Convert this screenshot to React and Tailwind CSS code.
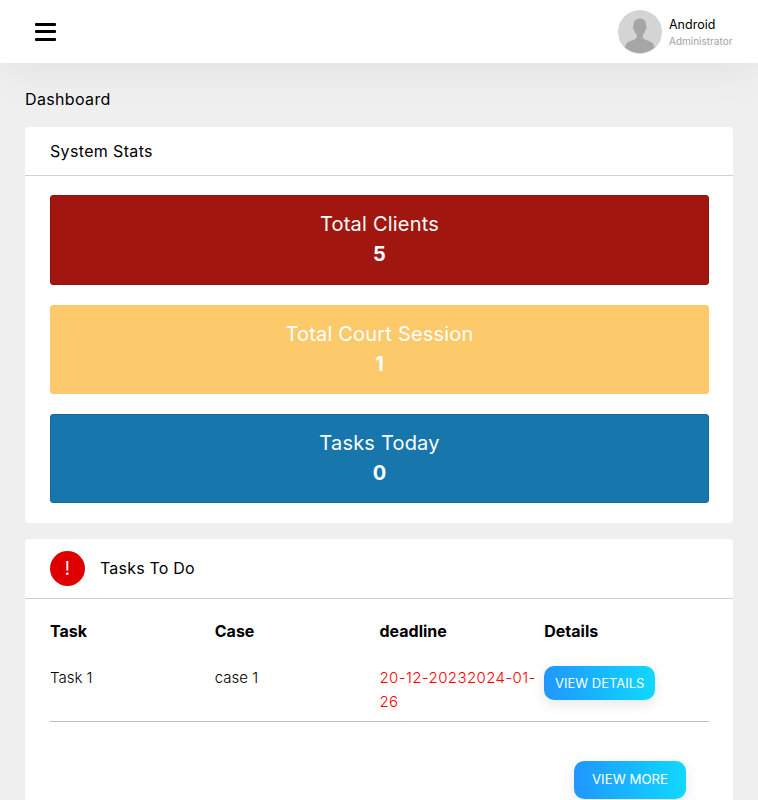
function StatBox({ title, value, className }) {
  return (
    <div className={`flex flex-col items-center justify-center rounded-[3px] border pb-[2px] text-white ${className}`}>
      <p className="text-[20px] leading-[30px] tracking-[0.2px]">{title}</p>
      <p className="text-[20px] leading-[30px] font-bold">{value}</p>
    </div>
  );
}

function Avatar() {
  return (
    <svg viewBox="0 0 44 44" className="h-[44px] w-[44px] rounded-full">
      <rect width="44" height="44" fill="#d4d4d4" />
      <path
        d="M22 8.5c-4.4 0-6.6 3-6.6 7 0 .9-.5 1.300-.4 2.300.1 1.100.8 1.500 1.100 2.200.5 1.900 1.300 3.600 2.500 4.700v3.200c-1 1.600-7.600 3-9.800 5.300-1 1-1.500 2.800-1.800 4.300 3.800 3.200 9 5.500 14.500 5.500s11-2.300 15-5.500c-.3-1.500-.8-3.300-1.800-4.300-2.200-2.300-8.800-3.700-9.800-5.300v-3.200c1.200-1.100 2-2.800 2.500-4.700.3-.7 1-1.100 1.100-2.200.1-1-.4-1.400-.4-2.300 0-4-1.700-7-6.100-7z"
        fill="#a6a6a6"
      />
    </svg>
  );
}

function App() {
  return (
    <div className="h-[800px] overflow-hidden bg-[#efefef] font-['Inter','Liberation_Sans',sans-serif] text-black">
      <header className="relative flex h-[63px] items-center justify-between bg-white pl-[35px] pr-[25px] shadow-[0_0_50px_rgba(0,0,50,0.08)]">
        <div className="flex w-[21px] flex-col gap-[4.500px]">
          <span className="h-[3px] rounded-[1px] bg-black" />
          <span className="h-[3px] rounded-[1px] bg-black" />
          <span className="h-[3px] rounded-[1px] bg-black" />
        </div>
        <div className="flex items-center gap-[7px] pt-[1px]">
          <Avatar />
          <div className="w-[64px] pt-[2px]">
            <p className="text-[12.500px] leading-[16px]">Android</p>
            <p className="text-[10px] leading-[16px] text-[#a3a3a3]">Administrator</p>
          </div>
        </div>
      </header>

      <main className="px-[25px]">
        <h1 className="pt-[26px] pb-[17px] text-[16px] leading-[21px] tracking-[0.35px]">Dashboard</h1>

        <section className="rounded-[4px] bg-white">
          <div className="flex h-[49px] items-center border-b border-[#d0d0d0] px-[25px] text-[16px] tracking-[0.35px]">System Stats</div>
          <div className="flex flex-col gap-[20px] pl-[25px] pr-[24px] pt-[19px] pb-[20px]">
            <StatBox title="Total Clients" value="5" className="h-[90px] bg-[#a21610] border-[#8f120d]" />
            <StatBox title="Total Court Session" value="1" className="h-[89px] bg-[#fcc96b] border-[#fcc96b]" />
            <StatBox title="Tasks Today" value="0" className="h-[89px] bg-[#1776ab] border-[#14699a]" />
          </div>
        </section>

        <section className="mt-[16px] rounded-[4px] bg-white pb-[20px]">
          <div className="flex h-[60px] items-center gap-[15px] border-b border-[#d0d0d0] px-[25px] text-[16px] tracking-[0.2px]">
            <span className="flex h-[35px] w-[35px] items-center justify-center rounded-full bg-[#de0000] text-[18px] text-white">!</span>
            <span className="pb-[2px]">Tasks To Do</span>
          </div>
          <div className="pl-[25px] pr-[24px]">
            <div className="grid grid-cols-4 pt-[21px] text-[16px] leading-[22px] font-bold">
              <span>Task</span>
              <span>Case</span>
              <span>deadline</span>
              <span>Details</span>
            </div>
            <div className="grid grid-cols-4 border-b border-[#bdbdbd] pt-[24px] pb-[7px] text-[15px] leading-[24px] font-light">
              <span>Task 1</span>
              <span>case 1</span>
              <span className="text-[#ff0000] tracking-[0.4px]">20-12-20232024-01-26</span>
              <div>
                <button className="h-[34px] w-[111px] rounded-[10px] bg-gradient-to-r from-[#2196ff] to-[#12d8ff] text-[13px] font-normal text-white shadow-[0_4px_14px_rgba(0,0,0,0.1)]">VIEW DETAILS</button>
              </div>
            </div>
            <div className="flex justify-end pt-[39px] pr-[23px]">
              <button className="h-[38px] w-[112px] rounded-[10px] bg-gradient-to-r from-[#2196ff] to-[#12d8ff] text-[13.250px] font-normal text-white shadow-[0_4px_14px_rgba(0,0,0,0.1)]">VIEW MORE</button>
            </div>
          </div>
        </section>
      </main>
    </div>
  );
}

export default App;
